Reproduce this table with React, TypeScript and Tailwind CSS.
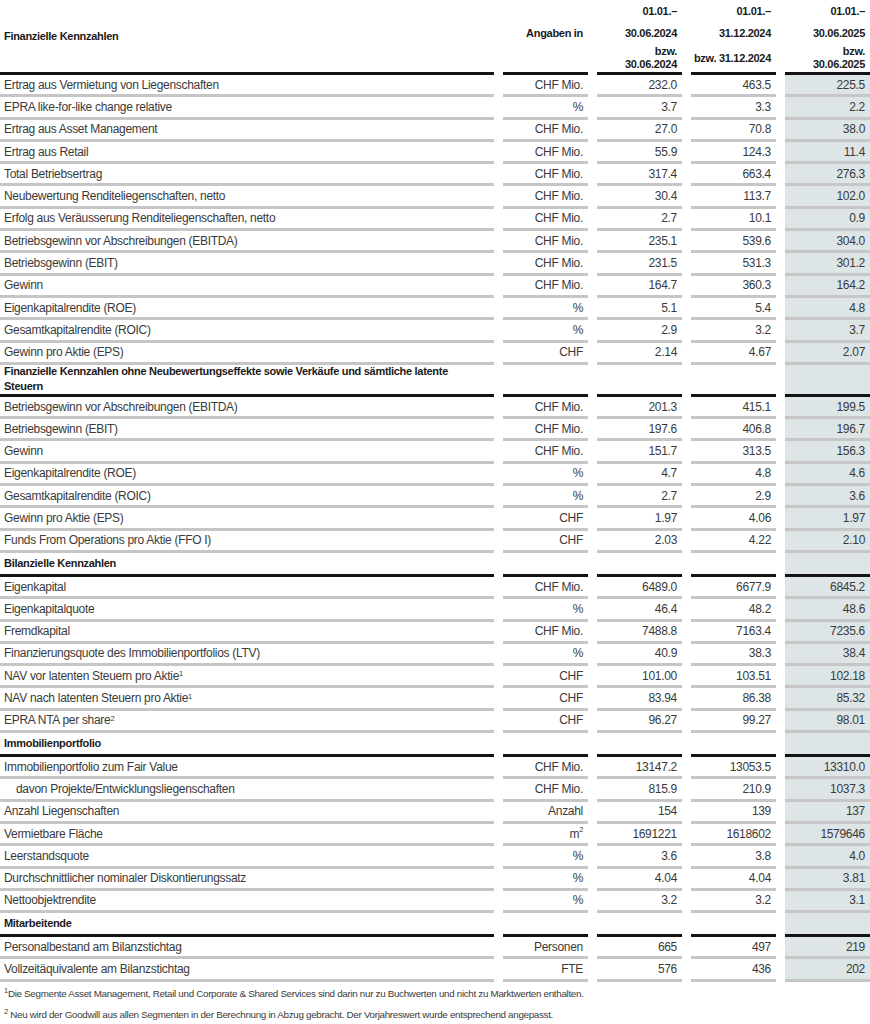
import React from 'react';

type Row = {
  label: React.ReactNode;
  unit: React.ReactNode;
  values: [string, string, string];
  indent?: boolean;
};

type Section = {
  title?: string;
  tall?: boolean;
  rows: Row[];
};

const Sup = ({ children }: { children: React.ReactNode }) => (
  <sup className="relative top-[-0.45em] text-[7.5px]">{children}</sup>
);

const sections: Section[] = [
  {
    rows: [
      { label: 'Ertrag aus Vermietung von Liegenschaften', unit: 'CHF Mio.', values: ['232.0', '463.5', '225.5'] },
      { label: 'EPRA like-for-like change relative', unit: '%', values: ['3.7', '3.3', '2.2'] },
      { label: 'Ertrag aus Asset Management', unit: 'CHF Mio.', values: ['27.0', '70.8', '38.0'] },
      { label: 'Ertrag aus Retail', unit: 'CHF Mio.', values: ['55.9', '124.3', '11.4'] },
      { label: 'Total Betriebsertrag', unit: 'CHF Mio.', values: ['317.4', '663.4', '276.3'] },
      { label: 'Neubewertung Renditeliegenschaften, netto', unit: 'CHF Mio.', values: ['30.4', '113.7', '102.0'] },
      { label: 'Erfolg aus Veräusserung Renditeliegenschaften, netto', unit: 'CHF Mio.', values: ['2.7', '10.1', '0.9'] },
      { label: 'Betriebsgewinn vor Abschreibungen (EBITDA)', unit: 'CHF Mio.', values: ['235.1', '539.6', '304.0'] },
      { label: 'Betriebsgewinn (EBIT)', unit: 'CHF Mio.', values: ['231.5', '531.3', '301.2'] },
      { label: 'Gewinn', unit: 'CHF Mio.', values: ['164.7', '360.3', '164.2'] },
      { label: 'Eigenkapitalrendite (ROE)', unit: '%', values: ['5.1', '5.4', '4.8'] },
      { label: 'Gesamtkapitalrendite (ROIC)', unit: '%', values: ['2.9', '3.2', '3.7'] },
      { label: 'Gewinn pro Aktie (EPS)', unit: 'CHF', values: ['2.14', '4.67', '2.07'] },
    ],
  },
  {
    title: 'Finanzielle Kennzahlen ohne Neubewertungseffekte sowie Verkäufe und sämtliche latente Steuern',
    tall: true,
    rows: [
      { label: 'Betriebsgewinn vor Abschreibungen (EBITDA)', unit: 'CHF Mio.', values: ['201.3', '415.1', '199.5'] },
      { label: 'Betriebsgewinn (EBIT)', unit: 'CHF Mio.', values: ['197.6', '406.8', '196.7'] },
      { label: 'Gewinn', unit: 'CHF Mio.', values: ['151.7', '313.5', '156.3'] },
      { label: 'Eigenkapitalrendite (ROE)', unit: '%', values: ['4.7', '4.8', '4.6'] },
      { label: 'Gesamtkapitalrendite (ROIC)', unit: '%', values: ['2.7', '2.9', '3.6'] },
      { label: 'Gewinn pro Aktie (EPS)', unit: 'CHF', values: ['1.97', '4.06', '1.97'] },
      { label: 'Funds From Operations pro Aktie (FFO I)', unit: 'CHF', values: ['2.03', '4.22', '2.10'] },
    ],
  },
  {
    title: 'Bilanzielle Kennzahlen',
    rows: [
      { label: 'Eigenkapital', unit: 'CHF Mio.', values: ['6489.0', '6677.9', '6845.2'] },
      { label: 'Eigenkapitalquote', unit: '%', values: ['46.4', '48.2', '48.6'] },
      { label: 'Fremdkapital', unit: 'CHF Mio.', values: ['7488.8', '7163.4', '7235.6'] },
      { label: 'Finanzierungsquote des Immobilienportfolios (LTV)', unit: '%', values: ['40.9', '38.3', '38.4'] },
      { label: <>NAV vor latenten Steuern pro Aktie<Sup>1</Sup></>, unit: 'CHF', values: ['101.00', '103.51', '102.18'] },
      { label: <>NAV nach latenten Steuern pro Aktie<Sup>1</Sup></>, unit: 'CHF', values: ['83.94', '86.38', '85.32'] },
      { label: <>EPRA NTA per share<Sup>2</Sup></>, unit: 'CHF', values: ['96.27', '99.27', '98.01'] },
    ],
  },
  {
    title: 'Immobilienportfolio',
    rows: [
      { label: 'Immobilienportfolio zum Fair Value', unit: 'CHF Mio.', values: ['13147.2', '13053.5', '13310.0'] },
      { label: 'davon Projekte/Entwicklungsliegenschaften', unit: 'CHF Mio.', values: ['815.9', '210.9', '1037.3'], indent: true },
      { label: 'Anzahl Liegenschaften', unit: 'Anzahl', values: ['154', '139', '137'] },
      { label: 'Vermietbare Fläche', unit: <>m<Sup>2</Sup></>, values: ['1691221', '1618602', '1579646'] },
      { label: 'Leerstandsquote', unit: '%', values: ['3.6', '3.8', '4.0'] },
      { label: 'Durchschnittlicher nominaler Diskontierungssatz', unit: '%', values: ['4.04', '4.04', '3.81'] },
      { label: 'Nettoobjektrendite', unit: '%', values: ['3.2', '3.2', '3.1'] },
    ],
  },
  {
    title: 'Mitarbeitende',
    rows: [
      { label: 'Personalbestand am Bilanzstichtag', unit: 'Personen', values: ['665', '497', '219'] },
      { label: 'Vollzeitäquivalente am Bilanzstichtag', unit: 'FTE', values: ['576', '436', '202'] },
    ],
  },
];

const gridCols = 'grid grid-cols-[1fr_85px_85px_85px_85px] gap-x-[9px]';
const black = 'border-b-[3px] border-[#141414]';
const gray = 'border-b-[3px] border-[#c6c6c6]';
const shade = 'bg-[#dde5e7]';

function HeaderRow() {
  const period = (a: string, b: string, c: React.ReactNode) => (
    <div className={`flex h-[75px] flex-col items-end pr-[5px] text-right ${black}`}>
      <div className="flex h-[22px] items-center">{a}</div>
      <div className="flex h-[22px] items-center">{b}</div>
      <div className="flex flex-1 items-center leading-[13px]">{c}</div>
    </div>
  );
  return (
    <div className={`${gridCols} text-[11px] font-bold tracking-[-0.3px] text-[#1a1a1a]`}>
      <div className={`flex h-[75px] items-center pl-[4px] ${black}`}>Finanzielle Kennzahlen</div>
      <div className={`flex h-[75px] flex-col items-end pr-[5px] ${black}`}>
        <div className="h-[22px]" />
        <div className="flex h-[22px] items-center">Angaben in</div>
      </div>
      {period('01.01.–', '30.06.2024', <span>bzw.<br />30.06.2024</span>)}
      {period('01.01.–', '31.12.2024', <span>bzw. 31.12.2024</span>)}
      {period('01.01.–', '30.06.2025', <span>bzw.<br />30.06.2025</span>)}
    </div>
  );
}

function SectionTitle({ title, tall }: { title: string; tall?: boolean }) {
  const h = tall ? 'h-[32px]' : 'h-[24px]';
  return (
    <div className={`${gridCols} text-[11px] font-bold leading-[15px] tracking-[-0.3px] text-[#1a1a1a]`}>
      <div className={`flex ${h} items-center pl-[4px] ${black}`}>
        <span className="max-w-[455px]">{title}</span>
      </div>
      <div className={`${h} ${black}`} />
      <div className={`${h} ${black}`} />
      <div className={`${h} ${black}`} />
      <div className={`${h} ${shade} ${black}`} />
    </div>
  );
}

function DataRow({ row }: { row: Row }) {
  const cell = `flex h-[22.3px] items-center ${gray}`;
  return (
    <div className={`${gridCols} text-[12px] tracking-[-0.3px] text-[#3a3a3a]`}>
      <div className={`${cell} ${row.indent ? 'pl-[16px]' : 'pl-[4px]'}`}>
        <span>{row.label}</span>
      </div>
      <div className={`${cell} justify-end pr-[5px]`}>{row.unit}</div>
      <div className={`${cell} justify-end pr-[5px]`}>{row.values[0]}</div>
      <div className={`${cell} justify-end pr-[5px]`}>{row.values[1]}</div>
      <div className={`${cell} ${shade} justify-end pr-[5px]`}>{row.values[2]}</div>
    </div>
  );
}

export default function App() {
  return (
    <div className="w-[870px] bg-white font-['Liberation_Sans',Arial,sans-serif]">
      <HeaderRow />
      {sections.map((s, i) => (
        <div key={i}>
          {s.title && <SectionTitle title={s.title} tall={s.tall} />}
          {s.rows.map((r, j) => (
            <DataRow key={j} row={r} />
          ))}
        </div>
      ))}
      <div className="pl-[4px] pt-[1px] text-[9.8px] tracking-[-0.3px] text-[#3a3a3a]">
        <p className="h-[21px] leading-[21px]">
          <Sup>1</Sup>Die Segmente Asset Management, Retail und Corporate &amp; Shared Services sind darin nur zu Buchwerten und nicht zu Marktwerten enthalten.
        </p>
        <p className="h-[21px] leading-[21px]">
          <Sup>2</Sup> Neu wird der Goodwill aus allen Segmenten in der Berechnung in Abzug gebracht. Der Vorjahreswert wurde entsprechend angepasst.
        </p>
      </div>
    </div>
  );
}
